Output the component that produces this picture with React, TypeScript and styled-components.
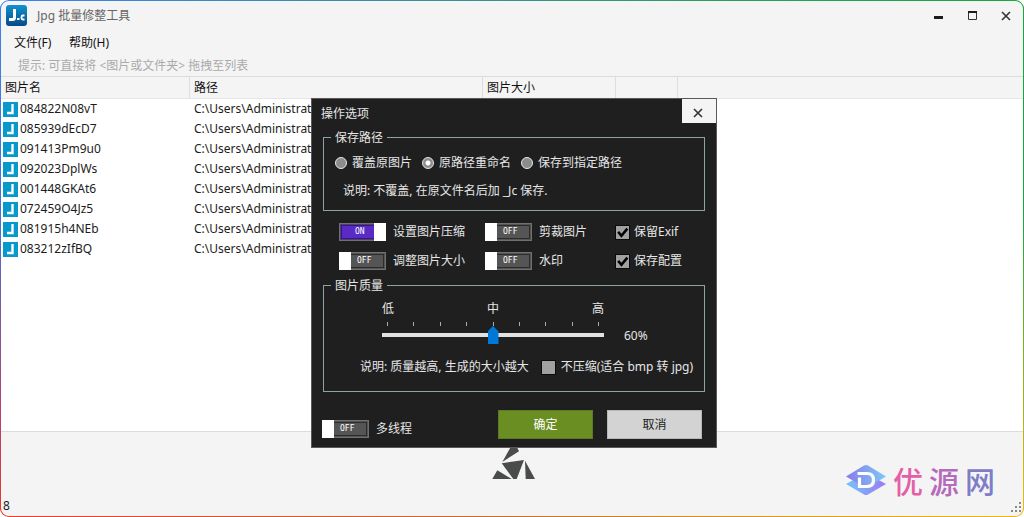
import React, { useState } from "react";
import styled, { createGlobalStyle } from "styled-components";

const GlobalStyle = createGlobalStyle`
  * { box-sizing: border-box; }
  body {
    margin: 0;
    background: #fff;
    color: #1c1c1c;
    font: 12px/20px "Noto Sans", "Noto Sans CJK SC", sans-serif;
  }
  button, input { font: inherit; margin: 0; }
`;

const Frame = styled.div`
  display: flex;
  height: 100vh;
  min-height: 460px;
  padding: 1px;
  border-radius: 9px;
  overflow: hidden;
  background:
    linear-gradient(to right, #3b82f0, #2f9a6a 65%, #17a83c) top / 100% 50% no-repeat,
    linear-gradient(to right, #ea3a2c, #c9702a 50%, #f2b90c) bottom / 100% 50% no-repeat;
`;

const SideEdges = styled.div`
  display: flex;
  flex: 1;
  margin: 0 -1px;
  padding: 0 1px;
  border-radius: 8px;
  background:
    linear-gradient(to bottom, #3b82f0, #4a6fd0 45%, #b84070 80%, #ea3a2c) left / 50% 100% no-repeat,
    linear-gradient(to bottom, #17a83c, #17a83c 40%, #f2b90c) right / 50% 100% no-repeat;
`;

const Window = styled.main`
  display: flex;
  flex: 1;
  flex-direction: column;
  min-width: 0;
  border-radius: 8px;
  overflow: hidden;
  background: #f4f4f4;
`;

const TitleBar = styled.header`
  display: flex;
  align-items: center;
  gap: 10px;
  height: 29px;
  padding: 0 0 0 5px;
`;

const Title = styled.h1`
  flex: 1;
  margin: 0;
  font-size: 12px;
  font-weight: 400;
  color: #666;
`;

const WindowButtons = styled.div`
  display: flex;
`;

const WindowButton = styled.button`
  display: grid;
  place-items: center;
  width: 34px;
  height: 26px;
  padding: 0;
  border: 0;
  background: none;
`;

const MenuBar = styled.nav`
  display: flex;
  height: 26px;
  padding: 3px 0 0 5px;
`;

const MenuItem = styled.button`
  width: 55px;
  height: 20px;
  padding: 0 0 0 8px;
  border: 0;
  background: none;
  color: #111;
  text-align: left;
  white-space: nowrap;
`;

const Hint = styled.p`
  height: 20px;
  margin: 0;
  padding-left: 17px;
  color: #aaa;
`;

const List = styled.section`
  flex: 1;
  min-height: 0;
  overflow: hidden;
  border-top: 1px solid #dcdcdc;
  border-bottom: 1px solid #dcdcdc;
  background: #fff;
`;

const FileTable = styled.table`
  width: 100%;
  table-layout: fixed;
  border-collapse: separate;
  border-spacing: 0;
`;

const HeadCell = styled.th<{ $width?: number }>`
  width: ${(p) => (p.$width ? `${p.$width}px` : "auto")};
  height: 22px;
  padding: 1px 0 0 4px;
  border-right: ${(p) => (p.$width ? "1px solid #dedede" : "0")};
  border-bottom: 1px solid #e6e6e6;
  background: #f4f4f4;
  color: #111;
  font-weight: 400;
  text-align: left;
`;

const Cell = styled.td`
  height: 20px;
  padding: 0 0 0 4px;
  overflow: hidden;
  white-space: nowrap;
`;

const FileName = styled.div`
  display: flex;
  align-items: center;
  gap: 2px;
  margin-left: -2px;
`;

const StatusBar = styled.footer`
  display: grid;
  grid-template-columns: 1fr 54px 1fr;
  height: 84px;
`;

const Count = styled.span`
  align-self: end;
  padding-left: 2px;
`;

const Brand = styled.div`
  display: flex;
  align-items: center;
  justify-content: flex-end;
  gap: 6px;
  padding: 12px 28px 0 0;
`;

const BrandGlyph = styled.span<{ $color: string }>`
  color: ${(p) => p.$color};
  font: 500 30px/32px "Noto Sans CJK SC", sans-serif;
`;

const ResizeGrip = styled.svg`
  position: absolute;
  right: 2px;
  bottom: 4px;
`;

const Overlay = styled.div`
  position: absolute;
  inset: 0;
  display: flex;
  align-items: flex-start;
  justify-content: center;
  padding: 98px 0 0 4px;
`;

const Dialog = styled.form`
  width: 406px;
  border: 1px solid #5c5858;
  background: #1f1f1f;
  color: #e6e6e6;
  white-space: nowrap;
`;

const DialogHeader = styled.div`
  display: flex;
  align-items: flex-start;
  justify-content: space-between;
  height: 24px;
`;

const DialogTitle = styled.h2`
  margin: 0;
  padding: 5px 0 0 9px;
  font-size: 12px;
  line-height: 20px;
  font-weight: 400;
`;

const CloseButton = styled.button`
  display: grid;
  place-items: center;
  width: 34px;
  height: 24px;
  padding: 4px 2px 0 0;
  border: 0;
  background: #f4f4f4;
`;

const DialogBody = styled.div`
  padding: 0 11px 8px;
`;

const Group = styled.fieldset<{ $pad: string }>`
  margin: 6px 0 0;
  padding: ${(p) => p.$pad};
  border: 1px solid #8ba5a3;
`;

const Legend = styled.legend`
  margin-left: 7px;
  padding: 1px 4px 0;
  line-height: 16px;
`;

const RadioRow = styled.div`
  display: grid;
  grid-template-columns: 87px 99px 1fr;
  padding-left: 11px;
`;

const Choice = styled.label<{ $gap: number }>`
  display: flex;
  align-items: center;
  gap: ${(p) => p.$gap}px;
  height: 20px;
`;

const Radio = styled.input`
  appearance: none;
  width: 12px;
  height: 12px;
  border: 1px solid #e8e8e8;
  border-radius: 50%;
  background: #8c8c8c;
  &:checked {
    background: radial-gradient(circle, #fff 0 2px, #8c8c8c 3px);
  }
`;

const Note = styled.p`
  margin: 8px 0 0 19px;
`;

const OptionGrid = styled.div`
  display: grid;
  grid-template-columns: 146px 130px 1fr;
  row-gap: 9px;
  margin: 11px 0 6px;
  padding-left: 16px;
`;

const Track = styled.span<{ $on: boolean }>`
  display: grid;
  align-items: center;
  width: 47px;
  height: 18px;
  border: 1px solid #707070;
  outline: 1px solid #2c2c2c;
  outline-offset: -3px;
  background: ${(p) => (p.$on ? "#5a2bc4" : "#555")};
`;

const ToggleInput = styled.input`
  grid-area: 1 / 1;
  appearance: none;
  width: 12px;
  height: 18px;
  margin: -1px;
  background: #fff;
  z-index: 1;
  &:checked {
    justify-self: end;
  }
`;

const ToggleText = styled.span<{ $on: boolean }>`
  grid-area: 1 / 1;
  padding-left: ${(p) => (p.$on ? 15 : 17)}px;
  color: #fff;
  font: 8px/12px "DejaVu Sans Mono", monospace;
`;

const Check = styled.input`
  appearance: none;
  width: 15px;
  height: 15px;
  border: 1px solid #0a0a0a;
  background: #a0a0a0;
  &:checked {
    background: #a0a0a0
      url("data:image/svg+xml,%3Csvg xmlns='http://www.w3.org/2000/svg' viewBox='0 0 12 12'%3E%3Cpath d='M2 5.5 5 9 10.5 2.5' fill='none' stroke='black' stroke-width='2.4'/%3E%3C/svg%3E");
  }
`;

const Quality = styled.div`
  display: grid;
  grid-template-columns: 222px auto;
  column-gap: 20px;
  justify-content: start;
  padding-left: 58px;
`;

const Levels = styled.div`
  display: flex;
  justify-content: space-between;
  line-height: 16px;
`;

const Ticks = styled.div`
  grid-column: 1;
  display: flex;
  justify-content: space-between;
  margin-top: 5px;
  padding: 0 5px;
`;

const Tick = styled.i`
  width: 1px;
  height: 4px;
  background: #aaa;
`;

const Slider = styled.input`
  grid-column: 1;
  appearance: none;
  width: 222px;
  height: 18px;
  background: linear-gradient(#e2e2e2, #e2e2e2) center / 100% 4px no-repeat;
  &::-webkit-slider-thumb {
    appearance: none;
    width: 11px;
    height: 18px;
    background: #0078d7;
    clip-path: polygon(50% 0, 100% 30%, 100% 100%, 0 100%, 0 30%);
  }
`;

const Percent = styled.output`
  line-height: 20px;
  height: 18px;
`;

const QualityNotes = styled.div`
  display: flex;
  align-items: center;
  gap: 12px;
  margin-top: 13px;
  padding-left: 36px;
`;

const Actions = styled.div`
  display: flex;
  align-items: flex-end;
  gap: 14px;
  margin-top: 18px;
  padding-right: 3px;
`;

const MultiThread = styled.div`
  flex: 1;
  margin-left: -1px;
`;

const ActionButton = styled.button<{ $primary?: boolean }>`
  width: 95px;
  height: 29px;
  padding: 0;
  border: 1px solid ${(p) => (p.$primary ? "#5c7a22" : "#b8b8b8")};
  background: ${(p) => (p.$primary ? "#6b8e23" : "#d3d3d3")};
  color: ${(p) => (p.$primary ? "#fff" : "#1c1c1c")};
`;

const files = [
  "084822N08vT",
  "085939dEcD7",
  "091413Pm9u0",
  "092023DplWs",
  "001448GKAt6",
  "072459O4Jz5",
  "081915h4NEb",
  "083212zIfBQ",
];

const AppIcon = () => (
  <svg width="21" height="21" viewBox="0 0 21 21" aria-hidden="true">
    <defs>
      <linearGradient id="appFill" x2="0" y2="1">
        <stop offset="0" stopColor="#1193cf" />
        <stop offset="1" stopColor="#064a86" />
      </linearGradient>
    </defs>
    <rect width="21" height="21" rx="3" fill="url(#appFill)" />
    <path d="M8.500 4v8.500q0 2-2 2H3" fill="none" stroke="#fff" strokeWidth="3" />
    <path d="M11 14h2.500" stroke="#fff" strokeWidth="1.800" />
    <path d="M18.500 10.500h-1.500q-1.500 0-1.500 1.500v1q0 1.500 1.500 1.500h1.500" fill="none" stroke="#fff" strokeWidth="1.800" />
  </svg>
);

const FileIcon = () => (
  <svg width="15" height="15" viewBox="0 0 15 15" aria-hidden="true">
    <rect width="15" height="15" fill="#0899cc" />
    <path d="M9.500 2v9H4" fill="none" stroke="#fff" strokeWidth="2.400" />
  </svg>
);

const CloseIcon = () => (
  <svg width="10" height="10" viewBox="0 0 10 10" aria-hidden="true">
    <path d="M1 1l8 8M9 1L1 9" stroke="#333" strokeWidth="1.600" />
  </svg>
);

const Emblem = () => (
  <svg width="54" height="60" viewBox="4 1 54 60" fill="#4a4c4b" aria-hidden="true">
    <path d="M33 10L38 20.300 21.300 31z" />
    <path d="M20.700 32.300L43 29 35.700 48H32.300z" />
    <path d="M11.300 48L16.300 39.300 30.700 48z" />
    <path d="M44 29.700L54 48H44.700z" />
  </svg>
);

const BrandMark = () => (
  <svg width="42" height="32" viewBox="0 0 42 32" aria-hidden="true">
    <defs>
      <linearGradient id="brandTop">
        <stop offset="0" stopColor="#8a7ae8" />
        <stop offset="1" stopColor="#7cc8fa" />
      </linearGradient>
      <linearGradient id="brandBottom">
        <stop offset="0" stopColor="#74c4fb" />
        <stop offset="1" stopColor="#9a7cf0" />
      </linearGradient>
    </defs>
    <path d="M1 20L21 9l20 11-18 10.500q-2 1-4 0z" fill="url(#brandBottom)" />
    <path d="M1 12.500L19 1.500q2-1 4 0l18 11L23 23q-2 1-4 0z" fill="url(#brandTop)" />
    <path d="M12.500 9.500H22q6.500 0 6.500 6.500t-6.500 6.500H14.500V13.500" fill="none" stroke="#fff" strokeWidth="3.200" />
  </svg>
);

function Toggle({ label, defaultOn = false }: { label: string; defaultOn?: boolean }) {
  const [on, setOn] = useState(defaultOn);
  return (
    <Choice $gap={7}>
      <Track $on={on}>
        <ToggleInput type="checkbox" role="switch" checked={on} onChange={() => setOn(!on)} />
        <ToggleText $on={on}>{on ? "ON" : "OFF"}</ToggleText>
      </Track>
      {label}
    </Choice>
  );
}

function OptionsDialog() {
  const [quality, setQuality] = useState(60);
  return (
    <Overlay>
      <Dialog role="dialog" aria-labelledby="options-title" onSubmit={(e) => e.preventDefault()}>
        <DialogHeader>
          <DialogTitle id="options-title">操作选项</DialogTitle>
          <CloseButton type="button" aria-label="关闭"><CloseIcon /></CloseButton>
        </DialogHeader>
        <DialogBody>
          <Group $pad="7px 0 9px">
            <Legend>保存路径</Legend>
            <RadioRow>
              <Choice $gap={5}><Radio type="radio" name="target" />覆盖原图片</Choice>
              <Choice $gap={5}><Radio type="radio" name="target" defaultChecked />原路径重命名</Choice>
              <Choice $gap={5}><Radio type="radio" name="target" />保存到指定路径</Choice>
            </RadioRow>
            <Note>说明: 不覆盖, 在原文件名后加 _Jc 保存.</Note>
          </Group>
          <OptionGrid>
            <Toggle label="设置图片压缩" defaultOn />
            <Toggle label="剪裁图片" />
            <Choice $gap={4}><Check type="checkbox" defaultChecked />保留Exif</Choice>
            <Toggle label="调整图片大小" />
            <Toggle label="水印" />
            <Choice $gap={4}><Check type="checkbox" defaultChecked />保存配置</Choice>
          </OptionGrid>
          <Group $pad="7px 0 14px">
            <Legend>图片质量</Legend>
            <Quality>
              <Levels><span>低</span><span>中</span><span>高</span></Levels>
              <Ticks>{Array.from({ length: 9 }, (_, i) => <Tick key={i} />)}</Ticks>
              <Slider
                type="range" min={20} max={100} step={10} value={quality} aria-label="图片质量"
                onChange={(e) => setQuality(Number(e.target.value))}
              />
              <Percent>{quality}%</Percent>
            </Quality>
            <QualityNotes>
              <span>说明: 质量越高, 生成的大小越大</span>
              <Choice $gap={5}><Check type="checkbox" />不压缩(适合 bmp 转 jpg)</Choice>
            </QualityNotes>
          </Group>
          <Actions>
            <MultiThread><Toggle label="多线程" /></MultiThread>
            <ActionButton type="submit" $primary>确定</ActionButton>
            <ActionButton type="button">取消</ActionButton>
          </Actions>
        </DialogBody>
      </Dialog>
    </Overlay>
  );
}

export default function App() {
  return (
    <>
      <GlobalStyle />
      <Frame>
        <SideEdges>
          <Window>
            <TitleBar>
              <AppIcon />
              <Title>Jpg 批量修整工具</Title>
              <WindowButtons>
                <WindowButton aria-label="最小化">
                  <svg width="10" height="10" viewBox="0 0 10 10"><path d="M1 5h9v3H1z" fill="#1c1c1c" /></svg>
                </WindowButton>
                <WindowButton aria-label="最大化">
                  <svg width="10" height="10" viewBox="0 0 10 10">
                    <path d="M1.500 .5h8v8h-8z" fill="none" stroke="#333" />
                    <path d="M1 0h9v2H1z" fill="#1c1c1c" />
                  </svg>
                </WindowButton>
                <WindowButton aria-label="关闭"><CloseIcon /></WindowButton>
              </WindowButtons>
            </TitleBar>
            <MenuBar>
              <MenuItem>文件(F)</MenuItem>
              <MenuItem>帮助(H)</MenuItem>
            </MenuBar>
            <Hint>提示: 可直接将 &lt;图片或文件夹&gt; 拖拽至列表</Hint>
            <List>
              <FileTable>
                <thead>
                  <tr>
                    <HeadCell $width={189}>图片名</HeadCell>
                    <HeadCell $width={293}>路径</HeadCell>
                    <HeadCell $width={133}>图片大小</HeadCell>
                    <HeadCell $width={62} />
                    <HeadCell />
                  </tr>
                </thead>
                <tbody>
                  {files.map((name) => (
                    <tr key={name}>
                      <Cell><FileName><FileIcon />{name}</FileName></Cell>
                      <Cell>C:\Users\Administrato</Cell>
                      <Cell />
                      <Cell />
                      <Cell />
                    </tr>
                  ))}
                </tbody>
              </FileTable>
            </List>
            <StatusBar>
              <Count>8</Count>
              <Emblem />
              <Brand>
                <BrandMark />
                <BrandGlyph $color="#e45fa8">优</BrandGlyph>
                <BrandGlyph $color="#b66abb">源</BrandGlyph>
                <BrandGlyph $color="#7f7cc8">网</BrandGlyph>
              </Brand>
            </StatusBar>
          </Window>
        </SideEdges>
        <ResizeGrip width="11" height="11" viewBox="0 0 11 11" fill="#888" aria-hidden="true">
          <path d="M8 0h2v2H8zM4 4h2v2H4zM8 4h2v2H8zM0 8h2v2H0zM4 8h2v2H4zM8 8h2v2H8z" />
        </ResizeGrip>
      </Frame>
      <OptionsDialog />
    </>
  );
}
